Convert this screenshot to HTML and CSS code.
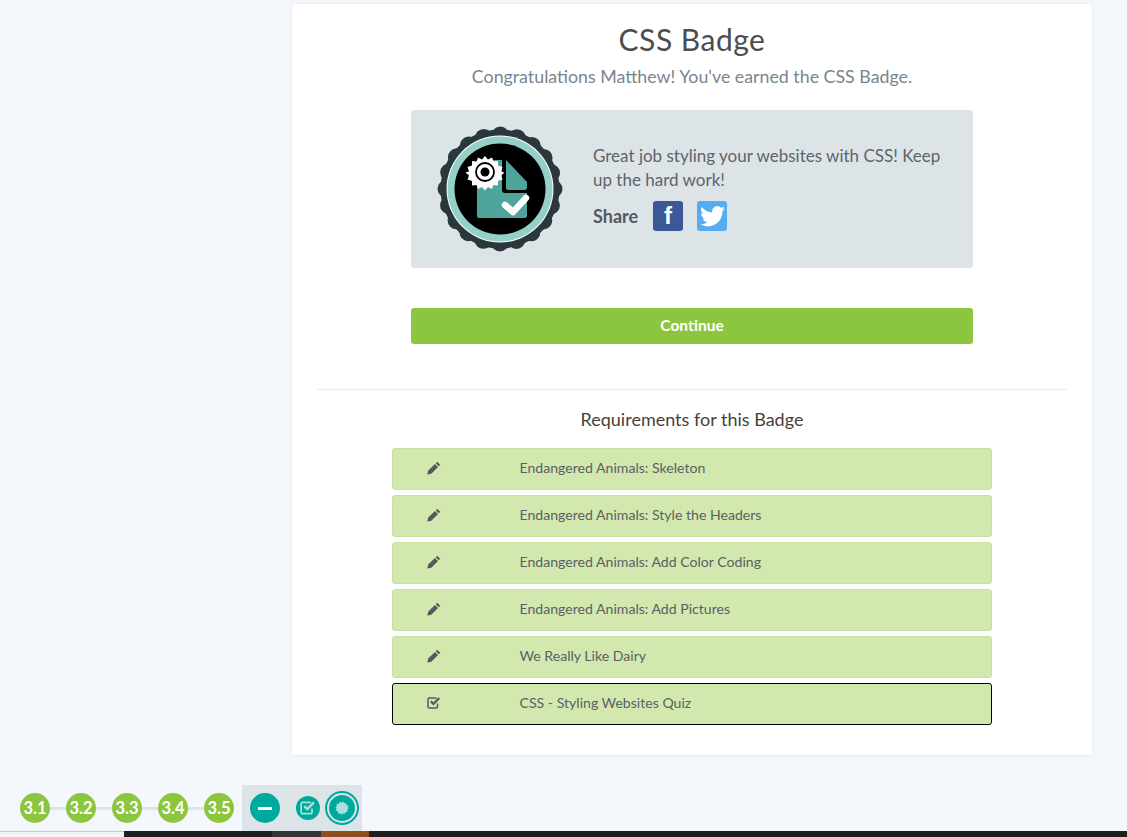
FILE: index.html
```html
<!DOCTYPE html>
<html lang="en">
<head>
    <meta charset="UTF-8">
    <title>CSS Badge</title>
    <link rel="stylesheet" href="styles.css">
</head>
<body>
    <div class="page">
        <div class="card">
            <h1>CSS Badge</h1>
            <p class="congrats">Congratulations Matthew! You've earned the CSS Badge.</p>

            <div class="earned">
                <svg class="badge" width="126" height="126" viewBox="0 0 126 126">
                    <circle cx="63" cy="63" r="59.500" fill="#2a383b"/>
                    <circle cx="63" cy="63" r="53.500" fill="none" stroke="#2a383b" stroke-width="18" stroke-linecap="round" stroke-dasharray="0 16.807"/>
                    <circle cx="63" cy="63" r="53.500" fill="#fff"/>
                    <circle cx="63" cy="63" r="52.500" fill="#94d0c8"/>
                    <circle cx="63" cy="63" r="45.500" fill="#000"/>
                    <path d="M40 36a2 2 0 0 1 2-2h23v30a3 3 0 0 0 3 3h22v23a2 2 0 0 1-2 2H42a2 2 0 0 1-2-2z" fill="#4fa599"/>
                    <path d="M69 34l21 22v6a2 2 0 0 1-2 2H71a2 2 0 0 1-2-2z" fill="#4fa599"/>
                    <path d="M48 30l3 3.500 4-2 1.500 4 4.500-.5 0 4.500 4.500 1.500-1.500 4.500 3.500 1-3.500 3 1.500 4-4.500 1.500 0 4.500-4.500-.5-1.500 4-4-2-3 3.500-3-3.500-4 2-1.500-4-4.500.5 0-4.500-4.500-1.500 1.500-4-3.500-3 3.500-1-1.500-4.500 4.500-1.500 0-4.500 4.500.5 1.500-4 4 2z" fill="#fff"/>
                    <circle cx="48" cy="46" r="9" fill="none" stroke="#000" stroke-width="1.800"/>
                    <circle cx="48" cy="46" r="4.500" fill="#000"/>
                    <path d="M68 79l8 7 13-14" fill="none" stroke="#fff" stroke-width="6.500" stroke-linecap="round" stroke-linejoin="round"/>
                </svg>
                <div class="earned-text">
                    <p>Great job styling your websites with CSS! Keep up the hard work!</p>
                    <div class="share">
                        <span class="share-label">Share</span>
                        <span class="social fb">f</span>
                        <span class="social tw">
                            <svg width="25" height="21" viewBox="0 0 24 20">
                                <path fill="#fff" d="M24 2.400a9.800 9.800 0 0 1-2.800.8A4.900 4.900 0 0 0 23.300.5a9.800 9.800 0 0 1-3.100 1.200 4.900 4.900 0 0 0-8.400 4.500A14 14 0 0 1 1.700.9a4.900 4.900 0 0 0 1.500 6.600 4.900 4.900 0 0 1-2.200-.6 4.900 4.900 0 0 0 3.900 4.900 4.900 4.900 0 0 1-2.200.1 4.900 4.900 0 0 0 4.600 3.400A9.900 9.900 0 0 1 0 17.300 14 14 0 0 0 7.500 19.500c9.100 0 14.300-7.700 14-14.600A10 10 0 0 0 24 2.400z"/>
                            </svg>
                        </span>
                    </div>
                </div>
            </div>

            <button class="continue">Continue</button>

            <hr>

            <h2>Requirements for this Badge</h2>
            <ul class="reqs">
                <li class="req"><svg class="pencil" width="14" height="14" viewBox="0 0 14 14"><path d="M10.200.8l3 3-1.400 1.400-3-3zM8 3l3 3-6.700 6.700-4 .9.900-4z"/></svg><span>Endangered Animals: Skeleton</span></li>
                <li class="req"><svg class="pencil" width="14" height="14" viewBox="0 0 14 14"><path d="M10.200.8l3 3-1.400 1.400-3-3zM8 3l3 3-6.700 6.700-4 .9.900-4z"/></svg><span>Endangered Animals: Style the Headers</span></li>
                <li class="req"><svg class="pencil" width="14" height="14" viewBox="0 0 14 14"><path d="M10.200.8l3 3-1.400 1.400-3-3zM8 3l3 3-6.700 6.700-4 .9.900-4z"/></svg><span>Endangered Animals: Add Color Coding</span></li>
                <li class="req"><svg class="pencil" width="14" height="14" viewBox="0 0 14 14"><path d="M10.200.8l3 3-1.400 1.400-3-3zM8 3l3 3-6.700 6.700-4 .9.900-4z"/></svg><span>Endangered Animals: Add Pictures</span></li>
                <li class="req"><svg class="pencil" width="14" height="14" viewBox="0 0 14 14"><path d="M10.200.8l3 3-1.400 1.400-3-3zM8 3l3 3-6.700 6.700-4 .9.900-4z"/></svg><span>We Really Like Dairy</span></li>
                <li class="req current"><svg class="check" width="14" height="14" viewBox="0 0 14 14"><path d="M10.500 7.500v3a1.500 1.500 0 0 1-1.500 1.500H2.500A1.500 1.500 0 0 1 1 10.500v-7A1.500 1.500 0 0 1 2.500 2h7" fill="none" stroke="#54595c" stroke-width="1.500"/><path d="M3.800 5.300l2.600 2.600L12.300 2" fill="none" stroke="#54595c" stroke-width="2.200"/></svg><span>CSS - Styling Websites Quiz</span></li>
            </ul>
        </div>
    </div>

    <nav class="progress">
        <div class="steps">
            <a class="step">3.1</a>
            <a class="step">3.2</a>
            <a class="step">3.3</a>
            <a class="step">3.4</a>
            <a class="step">3.5</a>
        </div>
        <div class="current-step">
            <span class="minus"><i></i></span>
            <span class="mini-check">
                <svg width="16" height="16" viewBox="0 0 14 14"><path d="M10.500 7.500v3a1.500 1.500 0 0 1-1.500 1.500H2.500A1.500 1.500 0 0 1 1 10.500v-7A1.500 1.500 0 0 1 2.500 2h7" fill="none" stroke="#a9e0d9" stroke-width="1.500"/><path d="M3.800 5.300l2.600 2.600L12.300 2" fill="none" stroke="#a9e0d9" stroke-width="2.200"/></svg>
            </span>
            <span class="mini-badge">
                <svg width="26" height="26" viewBox="0 0 26 26">
                    <circle cx="13" cy="13" r="13" fill="#00a99d"/>
                    <circle cx="13" cy="13" r="5.500" fill="#a9e0d9"/>
                    <circle cx="13" cy="13" r="5.500" fill="none" stroke="#a9e0d9" stroke-width="2" stroke-linecap="round" stroke-dasharray="0 2.880"/>
                </svg>
            </span>
        </div>
    </nav>

    <div class="taskbar">
        <div class="tb-light"></div>
        <div class="tb-dark"></div>
        <div class="tb-grey"></div>
        <div class="tb-orange"></div>
        <div class="tb-rest"></div>
    </div>
</body>
</html>
```

FILE: styles.css
```css
* {
    box-sizing: border-box;
}

html, body {
    height: 100%;
}

body {
    margin: 0;
    height: 837px;
    overflow: hidden;
    display: flex;
    flex-direction: column;
    background-color: #f4f7fb;
    font-family: 'Lato', 'Open Sans', Arial, sans-serif;
    color: #54595c;
}

.page {
    height: 785px;
    padding: 4px 0 0 292px;
}

.card {
    width: 800px;
    height: 751px;
    padding: 17px 25px 0;
    background-color: #fff;
    border-radius: 3px;
    box-shadow: 0 0 4px rgba(0, 0, 0, 0.08);
    text-align: center;
}

h1 {
    margin: 0;
    font-size: 30px;
    line-height: 36px;
    font-weight: 400;
    color: #4b4e50;
    letter-spacing: 0.5px;
}

.congrats {
    margin: 7px 0 0;
    font-size: 17.800px;
    line-height: 24px;
    color: #78858d;
}

.earned {
    display: flex;
    align-items: center;
    width: 562px;
    height: 158px;
    margin: 22px auto 0;
    padding-left: 26px;
    background-color: #dde4e8;
    border-radius: 3px;
    text-align: left;
}

.badge {
    flex: none;
}

.earned-text {
    margin: 0 0 3px 30px;
    width: 360px;
}

.earned-text p {
    margin: 0;
    font-size: 17px;
    line-height: 24px;
    color: #5d6469;
}

.share {
    display: flex;
    align-items: center;
    margin-top: 9px;
}

.share-label {
    font-size: 18px;
    font-weight: 700;
    color: #54595c;
    margin-right: 15px;
}

.social {
    display: flex;
    align-items: center;
    justify-content: center;
    width: 30px;
    height: 30px;
    margin-right: 14px;
    border-radius: 3px;
    color: #fff;
}

.fb {
    background-color: #3b5998;
    font-family: 'Liberation Sans', sans-serif;
    font-size: 24px;
    font-weight: 700;
}

.tw {
    background-color: #55acee;
}

.continue {
    display: block;
    width: 562px;
    height: 36px;
    margin: 40px auto 0;
    padding: 0 0 2px;
    border: none;
    border-radius: 3px;
    background-color: #8cc63e;
    color: #fff;
    font-family: inherit;
    font-size: 15.500px;
    font-weight: 700;
}

hr {
    height: 1px;
    margin: 45px 0 0;
    border: none;
    background-color: #e8eced;
}

h2 {
    margin: 18px 0 0;
    font-size: 18px;
    line-height: 22px;
    font-weight: 400;
    color: #4a3f38;
}

.reqs {
    list-style: none;
    width: 600px;
    margin: 18px auto 0;
    padding: 0;
}

.req {
    display: flex;
    align-items: center;
    height: 42px;
    margin-bottom: 5px;
    padding-left: 34px;
    background-color: #d2e8af;
    border: 1px solid #c8e0a0;
    border-radius: 3px;
    font-size: 14.100px;
    text-align: left;
    color: #5a6064;
}

.req svg {
    flex: none;
    margin-top: -3px;
    fill: #54595c;
}

.req span {
    margin: -3px 0 0 78.500px;
}

.req.current {
    border-color: #000;
}

.progress {
    display: flex;
    height: 46px;
    padding-left: 20px;
}

.steps {
    display: flex;
    align-items: center;
    gap: 16px;
    height: 46px;
    background: linear-gradient(#dde4e8, #dde4e8) no-repeat center / 100% 3px;
}

.step {
    display: flex;
    align-items: center;
    justify-content: center;
    width: 30px;
    height: 30px;
    border-radius: 50%;
    background-color: #8cc63e;
    color: #fff;
    font-size: 16.500px;
    font-weight: 700;
}

.current-step {
    display: flex;
    align-items: center;
    width: 120px;
    height: 46px;
    margin-left: 8px;
    padding-left: 8px;
    background-color: #dde4e8;
}

.minus {
    display: flex;
    align-items: center;
    justify-content: center;
    width: 30px;
    height: 30px;
    border-radius: 50%;
    background-color: #00a99d;
}

.minus i {
    width: 14px;
    height: 3px;
    background-color: #fff;
}

.mini-check {
    display: flex;
    align-items: center;
    justify-content: center;
    width: 24px;
    height: 24px;
    margin-left: 16px;
    border-radius: 50%;
    background-color: #00a99d;
}

.mini-badge {
    display: flex;
    align-items: center;
    justify-content: center;
    width: 34px;
    height: 34px;
    margin-left: 5px;
    border: 2px solid #00a99d;
    border-radius: 50%;
}

.taskbar {
    display: flex;
    height: 6px;
}

.tb-light {
    width: 124px;
    background-color: #f4f4f4;
    border-top: 1px solid #c9c9c9;
}

.tb-dark {
    width: 148px;
    background-color: #1f1f1f;
}

.tb-grey {
    width: 49px;
    background-color: #333;
}

.tb-orange {
    width: 48px;
    background-color: #8f4e1c;
}

.tb-rest {
    flex: 1;
    background-color: #1f1f1f;
}
```
